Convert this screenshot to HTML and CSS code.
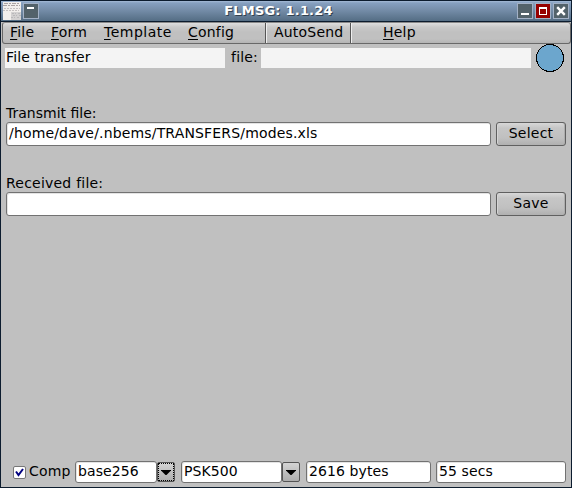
FILE: index.html
```html
<!DOCTYPE html>
<html lang="en">
<head>
<meta charset="utf-8">
<title>FLMSG: 1.1.24</title>
<link rel="stylesheet" href="styles.css">
</head>
<body>
<div class="window">
  <header class="titlebar">
    <svg class="app-icon" width="18" height="18" shape-rendering="crispEdges">
      <path fill="#f2efec" d="M0 0h18v18H0z"/>
      <path stroke="#aaa3a3" stroke-dasharray="4 1 2 1" d="M1 1.5h16M0 3.5h17"/>
      <path stroke="#c5c1c1" stroke-dasharray="2 1" d="M1 6.5h16M0 8.5h16"/>
      <path fill="#d3d1d1" d="M8 10h10v8H8z"/>
      <path stroke="#bab9ba" stroke-dasharray="2 1 1 2" d="M9 11.5h8M10 13.5h8M8 15.5h9"/>
    </svg>
    <svg class="wm" width="16" height="16"><path fill="#fff" d="M4 4h7v2H4z"/></svg>
    <h1 class="title">FLMSG: 1.1.24</h1>
    <svg class="wm" width="16" height="16"><path fill="#fff" d="M4 10h8v2H4z"/></svg>
    <svg class="wm wm-max" width="16" height="16"><path fill="#fff" fill-rule="evenodd" d="M4 4h8v8H4zM5 6v5h6V6z"/></svg>
    <svg class="wm" width="16" height="16"><path stroke="#fff" stroke-width="2.4" d="M4.2 4.2l7.6 7.6M11.8 4.2l-7.6 7.6"/></svg>
  </header>
  <nav class="menubar">
    <span class="item file"><u>F</u>ile</span>
    <span class="item form"><u>F</u>orm</span>
    <span class="item template"><u>T</u>emplate</span>
    <span class="item config"><u>C</u>onfig</span>
    <span class="item autosend">AutoSend</span>
    <span class="item help"><u>H</u>elp</span>
  </nav>
  <main class="content">
    <div class="status-row">
      <div class="output kind">File transfer</div>
      <span class="output-label">file:</span>
      <div class="output filename"></div>
      <svg class="lamp" width="28" height="28"><circle cx="14" cy="14" r="13.5" fill="#6ca6cd" stroke="#000" shape-rendering="crispEdges"/></svg>
    </div>
    <section class="transfer">
      <div class="label">Transmit file:</div>
      <div class="transfer-row">
        <div class="field">/home/dave/.nbems/TRANSFERS/modes.xls</div>
        <div class="button">Select</div>
      </div>
    </section>
    <section class="transfer">
      <div class="label received">Received file:</div>
      <div class="transfer-row">
        <div class="field"></div>
        <div class="button">Save</div>
      </div>
    </section>
    <footer class="footer">
      <span class="check"><svg width="11" height="11"><path fill="none" stroke="#000080" stroke-width="2" d="M2 4.5L4.5 8 9 2"/></svg></span>
      <span class="check-label">Comp</span>
      <div class="small-field encoding">base256</div>
      <div class="arrow focused"><svg width="10" height="5"><path d="M0 0h10v.5L5.5 5h-1L0 .5z"/></svg></div>
      <div class="small-field mode">PSK500</div>
      <div class="arrow"><svg width="10" height="5"><path d="M0 0h10v.5L5.5 5h-1L0 .5z"/></svg></div>
      <div class="small-field bytes">2616 bytes</div>
      <div class="small-field secs">55 secs</div>
    </footer>
  </main>
</div>
</body>
</html>
```
FILE: styles.css
```css
* { box-sizing: border-box; }
body { margin: 0; font: 14px/20px "DejaVu Sans", sans-serif; color: #000; }
svg { display: block; flex: none; }
.window {
  width: 572px; height: 488px;
  display: flex; flex-direction: column;
  background: #c0c0c0;
  border: 1px solid #0c1c2e; border-top: 0;
  overflow: hidden;
}
.titlebar {
  height: 22px; flex: none;
  display: flex; align-items: center; gap: 2px;
  padding: 0 2px;
  border-top: 1px solid #0c1c2e; border-bottom: 1px solid #0c1c2e;
  background: linear-gradient(#a5bbd6 0, #86a0c0 2px, #7890ac 40%, #546d84 100%);
}
.title {
  flex: 1; margin: 0; padding-left: 1px; text-align: center;
  font-size: 13px; line-height: 18px; font-weight: bold; color: #fff;
  letter-spacing: 0.2px;
  text-shadow: 1px 1px 0 #33414f;
}
.wm { background: #53626a; border: 1px solid #a3b1c6; }
.wm path { transform: translate(-1px, -1px); }
.wm-max { background: #960000; }
.menubar {
  height: 22px; flex: none; margin-left: 1px;
  display: flex;
  border: 1px solid #686868; border-top-color: #8a8a8a; border-radius: 3px;
  background: linear-gradient(#dedede 0, #cacaca 4px, #c0c0c0 9px, #c0c0c0 16px, #b4b4b4 100%);
}
.item { line-height: 19px; white-space: nowrap; letter-spacing: 0.2px; }
.item u { text-decoration: underline; text-decoration-thickness: 1px; text-underline-offset: 2px; }
.file { width: 41px; margin-left: 7px; }
.form { width: 53px; }
.template { width: 84px; letter-spacing: 0.5px; }
.config { width: 78px; border-right: 1px solid #565656; }
.autosend { width: 85px; padding-left: 7px; border-left: 1px solid #eee; border-right: 1px solid #565656; }
.help { padding-left: 31px; border-left: 1px solid #eee; }
.content { flex: 1; display: flex; flex-direction: column; padding: 0 5px 4px 4px; }
.status-row { height: 28px; display: flex; align-items: center; }
.output { height: 20px; background: #f4f4f4; line-height: 19px; padding-left: 1px; letter-spacing: 0.12px; }
.kind { width: 220px; }
.output-label { width: 36px; padding-left: 6px; line-height: 18px; transform: translateY(-1px); letter-spacing: 0.2px; }
.filename { width: 270px; }
.lamp { margin-left: 5px; }
.transfer { margin: 31px 0 0 1px; }
.transfer + .transfer { margin-top: 27px; }
.label { height: 19px; line-height: 20px; }
.received { letter-spacing: 0.22px; }
.transfer-row { display: flex; gap: 5px; height: 24px; }
.field, .small-field {
  background: #fff; border: 1px solid #727272; border-radius: 3px;
  box-shadow: inset 1px 1px 0 #e4e4e4;
  padding-left: 2px; white-space: nowrap;
}
.field { width: 485px; line-height: 20px; letter-spacing: 0.165px; }
.button {
  width: 70px; text-align: center; line-height: 20px; letter-spacing: 0.25px;
  border: 1px solid #606060; border-radius: 3px;
  background: linear-gradient(#d8d8d8, #c6c6c6 5px, #c0c0c0 15px, #b0b0b0);
  box-shadow: inset 1px 0 0 #d4d4d4, inset -1px 0 0 #adadad;
}
.footer { display: flex; align-items: center; margin-top: auto; height: 22px; padding-left: 8px; }
.check { width: 13px; height: 13px; background: #fff; border: 1px solid #777; border-radius: 2px; }
.check-label { width: 49px; padding-left: 3px; line-height: 18px; letter-spacing: 0.2px; transform: translateY(-1px); }
.small-field { height: 22px; line-height: 19px; letter-spacing: 0.1px; }
.encoding { width: 82px; }
.arrow {
  width: 18px; height: 20px; margin-right: 6px;
  display: grid; place-items: center;
  border: 1px solid #555; border-radius: 2px;
  background: linear-gradient(#d4d4d4, #c0c0c0 50%, #aeaeae);
}
.focused { outline: 1px dotted #000; outline-offset: -2px; }
.mode { width: 101px; }
.bytes { width: 125px; margin-right: 5px; }
.secs { width: 130px; }
```
